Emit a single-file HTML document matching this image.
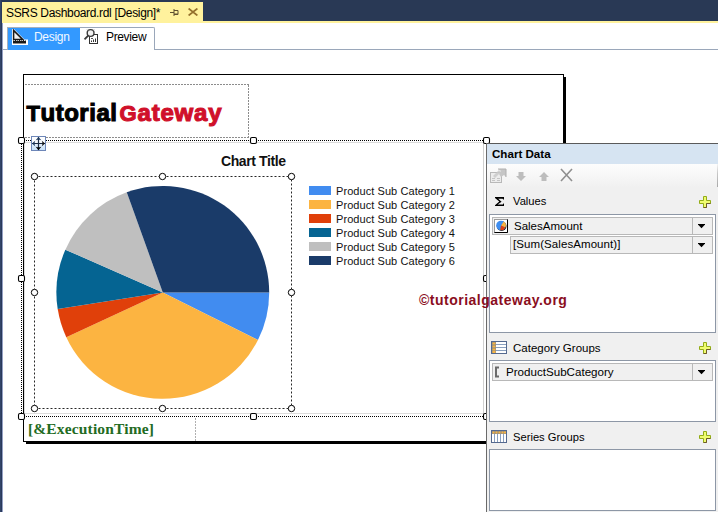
<!DOCTYPE html>
<html><head><meta charset="utf-8">
<style>
html,body{margin:0;padding:0;width:718px;height:512px;overflow:hidden;background:#fff;position:relative;font-family:"Liberation Sans",sans-serif;}
.a{position:absolute;}
.t{position:absolute;white-space:nowrap;line-height:1;}
</style></head><body>
<!-- frame -->
<div class="a" style="left:0;top:0;width:718px;height:2px;background:#293955"></div>
<div class="a" style="left:0;top:0;width:1px;height:512px;background:#33456a"></div>
<div class="a" style="left:1px;top:0;width:1px;height:512px;background:#2a3a5b"></div>
<div class="a" style="left:2px;top:23px;width:1px;height:489px;background:#94a0c4"></div>
<div class="a" style="left:203px;top:0;width:515px;height:21px;background:#293955"></div>
<div class="a" style="left:2px;top:2px;width:201px;height:19px;background:#fff29d"></div>
<div class="a" style="left:2px;top:21px;width:716px;height:2px;background:#fff29d"></div>
<div class="t" style="left:6px;top:7px;font-size:12px;letter-spacing:-0.33px;color:#000">SSRS Dashboard.rdl [Design]*</div>
<!-- pin -->
<svg class="a" style="left:168px;top:6px" width="12" height="12" viewBox="0 0 12 12">
<path d="M2 6.5H6 M6 3V10 M6 4.5H10V8.5H6" stroke="#5e5030" stroke-width="1" fill="none"/><path d="M6 8H10" stroke="#5e5030" stroke-width="1"/>
</svg>
<svg class="a" style="left:188px;top:8px" width="10" height="8" viewBox="0 0 10 8">
<path d="M0.6 0.5L9.4 7.5M9.4 0.5L0.6 7.5" stroke="#94702c" stroke-width="1.7" fill="none"/>
</svg>

<!-- tabs -->
<div class="a" style="left:3px;top:49px;width:715px;height:1px;background:#9aa7ba"></div>
<div class="a" style="left:7px;top:27px;width:73px;height:23px;background:#3399ff;border-top:1px solid #a8b0bc;border-left:1px solid #a8b0bc;box-sizing:border-box"></div>
<div class="t" style="left:34px;top:30.7px;font-size:12px;letter-spacing:-0.3px;color:#f2f8ff">Design</div>
<!-- design icon -->
<svg class="a" style="left:11px;top:28px" width="18" height="18" viewBox="0 0 18 18">
<path d="M1 1H3L13.5 11.5H17V17H1Z" fill="#fff"/>
<path d="M2.6 2.4V11.6H11.8Z" fill="#f2f2f2" stroke="#1a1a1a" stroke-width="1.5" stroke-linejoin="miter"/>
<rect x="2" y="13" width="13" height="2.5" fill="#1a1a1a"/>
<path d="M2.5 12.5V13.5M4.5 12V13.5M6.5 12.5V13.5M8.5 12V13.5M10.5 12.5V13.5M12.5 12V13.5M14.5 12.5V13.5" stroke="#1a1a1a" stroke-width="1"/>
</svg>
<div class="a" style="left:80px;top:27px;width:75px;height:23px;border-top:1px solid #9aa7ba;border-right:1px solid #9aa7ba;border-radius:0 2px 0 0;box-sizing:border-box;background:#fff"></div>
<div class="t" style="left:106px;top:30.7px;font-size:12px;letter-spacing:-0.35px;color:#000">Preview</div>
<svg class="a" style="left:82px;top:28px" width="18" height="18" viewBox="0 0 18 18">
<rect x="7.5" y="6.5" width="8" height="9" fill="#fff" stroke="#333" stroke-width="1"/>
<rect x="9" y="10" width="2" height="1" fill="#555"/><rect x="9" y="12.5" width="1" height="1.5" fill="#333"/><rect x="11" y="11.5" width="1" height="2.5" fill="#333"/><rect x="13" y="10.5" width="1" height="3.5" fill="#333"/>
<circle cx="8.6" cy="5" r="3.4" fill="#f2f2f2" stroke="#3a3a3a" stroke-width="1.4"/>
<path d="M6.2 7.6L2.5 11.3" stroke="#3a3a3a" stroke-width="1.8"/>
<path d="M5 1.5L6 2.5M12.2 1.5L11.2 2.5" stroke="#aaa" stroke-width="1"/>
</svg>

<!-- report body -->
<div class="a" style="left:23px;top:74px;width:541px;height:368px;border:1px solid #000;box-sizing:border-box"></div>
<div class="a" style="left:564px;top:77px;width:2px;height:367px;background:#000"></div>
<div class="a" style="left:26px;top:442px;width:540px;height:2px;background:#000"></div>

<!-- logo textbox -->

<div class="t" style="left:26.5px;top:101.4px;font-size:24px;font-weight:bold;color:#000;letter-spacing:0.53px;-webkit-text-stroke:1.1px #000"><span style="font-size:22px">T</span>utorial</div>
<div class="t" style="left:119.6px;top:101.4px;font-size:24px;font-weight:bold;color:#d0102a;letter-spacing:0.8px;-webkit-text-stroke:1.1px #d0102a"><span style="font-size:22px">G</span>ateway</div>

<!-- execution time textbox -->
<div class="a" style="left:24px;top:413px;width:460px;height:1px;background:#d8d8d8"></div>

<div class="t" style="left:28px;top:421px;font-family:'Liberation Serif',serif;font-size:15.5px;letter-spacing:0.15px;font-weight:bold;color:#236b23">[&amp;ExecutionTime]</div>

<!-- chart -->
<div class="a" style="left:24px;top:142px;width:460px;height:272px;border:1px solid #dcdcdc;border-right:none;box-sizing:border-box"></div>
<div class="a" style="left:483px;top:142px;width:1px;height:272px;background:#d0d0d0"></div>
<div class="a" style="left:21px;top:140px;width:466px;height:277px;border:1px dotted #000;box-sizing:border-box"></div>
<div class="t" style="left:221px;top:154px;font-size:14px;letter-spacing:-0.4px;font-weight:bold;color:#111">Chart Title</div>

<svg class="a" style="left:0;top:0" width="718" height="512">
<g stroke="#8c8c8c" stroke-width="1" stroke-dasharray="2 1" fill="none">
<path d="M25 84.5H249"/><path d="M248.5 85V138"/><path d="M25 137.5H248"/>
<path d="M195.5 418V441" stroke="#b0b0b0"/>
</g>
<g transform="translate(162.8 292.4)">
</g>
<path d="M162.8 292.4L269.20 292.40A106.4 106.4 0 0 1 257.94 340.04Z" fill="#418cf0"/>
<path d="M162.8 292.4L257.94 340.04A106.4 106.4 0 0 1 66.29 337.20Z" fill="#fcb441"/>
<path d="M162.8 292.4L66.29 337.20A106.4 106.4 0 0 1 57.71 309.04Z" fill="#e0400a"/>
<path d="M162.8 292.4L57.71 309.04A106.4 106.4 0 0 1 65.37 249.63Z" fill="#056492"/>
<path d="M162.8 292.4L65.37 249.63A106.4 106.4 0 0 1 126.76 192.29Z" fill="#bfbfbf"/>
<path d="M162.8 292.4L126.76 192.29A106.4 106.4 0 0 1 269.20 292.40Z" fill="#1a3b69"/>
<!-- plot area -->
<rect x="34.5" y="176.5" width="257" height="232" fill="none" stroke="#000" stroke-width="1" stroke-dasharray="2 2" opacity="0.85"/>
<g fill="#fff" stroke="#000" stroke-width="1">
<circle cx="34.5" cy="176.5" r="3.2"/><circle cx="162.5" cy="176.5" r="3.2"/><circle cx="291.5" cy="176.5" r="3.2"/>
<circle cx="34.5" cy="292.5" r="3.2"/><circle cx="291.5" cy="292.5" r="3.2"/>
<circle cx="34.5" cy="408.5" r="3.2"/><circle cx="162.5" cy="408.5" r="3.2"/><circle cx="291.5" cy="408.5" r="3.2"/>
</g>
<!-- chart handles -->
<g fill="#fff" stroke="#000" stroke-width="1.1">
<rect x="18.5" y="137.5" width="6" height="6" rx="1.5"/><rect x="250.5" y="137.5" width="6" height="6" rx="1.5"/><rect x="483.5" y="137.5" width="6" height="6" rx="1.5"/>
<rect x="18.5" y="275.5" width="6" height="6" rx="1.5"/><rect x="483.5" y="275.5" width="6" height="6" rx="1.5"/>
<rect x="18.5" y="413.5" width="6" height="6" rx="1.5"/><rect x="250.5" y="413.5" width="6" height="6" rx="1.5"/><rect x="483.5" y="413.5" width="6" height="6" rx="1.5"/>
</g>
<!-- move icon -->
<defs><linearGradient id="mg" x1="0" y1="0" x2="1" y2="1"><stop offset="0" stop-color="#f4f8fd"/><stop offset="0.5" stop-color="#e4eefa"/><stop offset="1" stop-color="#b8d8f8"/></linearGradient></defs>
<defs><linearGradient id="mg2" x1="0" y1="0" x2="0" y2="1"><stop offset="0" stop-color="#ffffff"/><stop offset="0.5" stop-color="#f4f8fc"/><stop offset="0.55" stop-color="#e2eefa"/><stop offset="1" stop-color="#c4e0fa"/></linearGradient></defs>
<rect x="31.5" y="136.5" width="14" height="14" fill="url(#mg2)" stroke="#6d86b8" stroke-width="1"/>
<path d="M38.5 137V150M32 143.5H45" stroke="#1c2c44" stroke-width="1.2"/>
<path d="M38.5 137L41.3 140.3L38.5 139.4L35.7 140.3Z" fill="#1e3a5f"/>
<path d="M38.5 150.2L41.3 146.8L38.5 147.6L35.7 146.8Z" fill="#000"/>
<path d="M32 143.5L35.2 140.8L34.4 143.5L35.2 146.2Z" fill="#1e3a5f"/>
<path d="M45 143.5L41.8 140.8L42.6 143.5L41.8 146.2Z" fill="#111"/>
<!-- legend -->
<rect x="309" y="186" width="22" height="9" fill="#418cf0"/>
<rect x="309" y="200" width="22" height="9" fill="#fcb441"/>
<rect x="309" y="214" width="22" height="9" fill="#e0400a"/>
<rect x="309" y="228" width="22" height="9" fill="#056492"/>
<rect x="309" y="242" width="22" height="9" fill="#bfbfbf"/>
<rect x="309" y="256" width="22" height="9" fill="#1a3b69"/>
</svg>

<div class="t" style="left:336px;top:184px;font-size:11px;letter-spacing:0.07px;color:#111;line-height:14px">Product Sub Category 1<br>Product Sub Category 2<br>Product Sub Category 3<br>Product Sub Category 4<br>Product Sub Category 5<br>Product Sub Category 6</div>
<!-- PANEL -->
<div class="a" style="left:486px;top:143px;width:232px;height:369px;background:#f0f0f0;border-left:1px solid #6a6a6a;border-top:1px solid #5a5a5a;box-sizing:border-box"></div>
<div class="a" style="left:487px;top:144px;width:231px;height:20px;background:#d6e4f2"></div>
<div class="a" style="left:487px;top:164px;width:231px;height:24px;background:linear-gradient(#fdfdfd,#f0f0f0)"></div>
<div class="a" style="left:717px;top:164px;width:1px;height:23px;background:linear-gradient(#f4f4f4,#c8c8c8 40%,#a8a8a8)"></div>
<div class="t" style="left:492px;top:148px;font-size:11.6px;font-weight:bold;color:#000">Chart Data</div>
<!-- toolbar icons -->
<svg class="a" style="left:488px;top:166px" width="90" height="20" viewBox="0 0 90 20">
<rect x="2.5" y="6.5" width="11" height="10" fill="#ececec" stroke="#b8b8b8"/>
<path d="M4 12.5H7M9 12.5H12M4 14.5H7M9 14.5H12" stroke="#c4c4c4" stroke-width="1"/>
<path d="M5 10L11 4L13 6L7 12Z" fill="#c8c8c8" opacity="0.8"/>
<path d="M10 3H18V11L16 9L13 11L11 8L13 5Z" fill="#c6c6c6"/>
<path d="M10 3H18V11" fill="none" stroke="#b0b0b0" stroke-width="1"/>
<path d="M30.5 6H35.5V10H38L33 15L28 10H30.5Z" fill="#bdbdbd"/>
<path d="M56 6L61 11H58.5V15H53.5V11H51Z" fill="#bdbdbd"/>
<path d="M73 3L84 15M84 3L73 15" stroke="#8f8f8f" stroke-width="1.6"/>
</svg>
<!-- Values header -->
<svg class="a" style="left:494px;top:196px" width="11" height="11" viewBox="0 0 11 11"><path d="M1 1H10V3.5H9.2L8.6 2.7H4.2L7.6 5.8L3.6 8.5H8.8L9.3 7.6H10V10H1V9.2L5.3 5.6L1 1.9Z" fill="#000"/></svg>
<div class="t" style="left:513px;top:196px;font-size:11.2px;color:#000">Values</div>
<svg class="a" style="left:699px;top:196px" width="12" height="12" viewBox="0 0 12 12">
<path d="M4.5 0.5H7.5V4.5H11.5V7.5H7.5V11.5H4.5V7.5H0.5V4.5H4.5Z" fill="#f0fc70" stroke="#93ac18" stroke-width="1"/><path d="M11.5 7.5H7.5V11.5H4.5" fill="none" stroke="#6e5a2a" stroke-width="1"/>
</svg>
<!-- values listbox -->
<div class="a" style="left:489px;top:214px;width:227px;height:119px;background:#fff;border:1px solid #8d97a6;box-sizing:border-box"></div>
<div class="a" style="left:492px;top:217px;width:221px;height:18px;background:#f0f0f0;border:1px solid #b8b8b8;box-sizing:border-box"></div>
<div class="a" style="left:692px;top:218px;width:1px;height:16px;background:#b8b8b8"></div>
<svg class="a" style="left:698px;top:224px" width="7" height="5"><path d="M0 0H7V0.6L3.5 4.3L0 0.6Z" fill="#000"/></svg>
<svg class="a" style="left:494px;top:219px" width="14" height="14" viewBox="0 0 14 14">
<rect x="0.5" y="0.5" width="13" height="13" fill="#fff" stroke="#9a9a9a"/>
<path d="M13.5 0.5V13.5H0.5" fill="none" stroke="#000"/>
<circle cx="7.6" cy="7.1" r="4.9" fill="#000" opacity="0.9"/>
<circle cx="7" cy="6.5" r="4.8" fill="#3f8ef0"/>
<path d="M7 6.5L9.75 2.57A4.8 4.8 0 0 1 11.35 8.53Z" fill="#fbb43c"/>
<path d="M7 6.5L11.35 8.53A4.8 4.8 0 0 1 6.17 11.23Z" fill="#e04010"/>
</svg>
<div class="t" style="left:514px;top:221px;font-size:11.5px;color:#000">SalesAmount</div>
<div class="a" style="left:510px;top:236px;width:203px;height:18px;background:#f0f0f0;border:1px solid #b8b8b8;box-sizing:border-box"></div>
<div class="a" style="left:692px;top:237px;width:1px;height:16px;background:#b8b8b8"></div>
<svg class="a" style="left:698px;top:243px" width="7" height="5"><path d="M0 0H7V0.6L3.5 4.3L0 0.6Z" fill="#000"/></svg>
<div class="t" style="left:513px;top:239px;font-size:11.5px;letter-spacing:0.08px;color:#000">[Sum(SalesAmount)]</div>
<!-- Category groups -->
<svg class="a" style="left:491px;top:341px" width="16" height="13" viewBox="0 0 16 13">
<rect x="0.5" y="0.5" width="15" height="12" fill="#fff" stroke="#54698f"/>
<rect x="1" y="1" width="4" height="11" fill="#8a8a8a"/>
<path d="M5 3.5H15M5 6.5H15M5 9.5H15" stroke="#8aa0bf" stroke-width="1"/>
<rect x="1.5" y="1.5" width="3" height="2" fill="#f8b440"/><rect x="1.5" y="4.5" width="3" height="2" fill="#f8b440"/><rect x="1.5" y="7.5" width="3" height="2" fill="#f8b440"/><rect x="1.5" y="10" width="3" height="2" fill="#f8b440"/>
</svg>
<div class="t" style="left:513px;top:343px;font-size:11.5px;color:#000">Category Groups</div>
<svg class="a" style="left:699px;top:342px" width="12" height="12" viewBox="0 0 12 12">
<path d="M4.5 0.5H7.5V4.5H11.5V7.5H7.5V11.5H4.5V7.5H0.5V4.5H4.5Z" fill="#f0fc70" stroke="#93ac18" stroke-width="1"/><path d="M11.5 7.5H7.5V11.5H4.5" fill="none" stroke="#6e5a2a" stroke-width="1"/>
</svg>
<div class="a" style="left:489px;top:360px;width:227px;height:62px;background:#fff;border:1px solid #8d97a6;box-sizing:border-box"></div>
<div class="a" style="left:492px;top:363px;width:221px;height:18px;background:#f0f0f0;border:1px solid #b8b8b8;box-sizing:border-box"></div>
<div class="a" style="left:692px;top:364px;width:1px;height:16px;background:#b8b8b8"></div>
<svg class="a" style="left:698px;top:370px" width="7" height="5"><path d="M0 0H7V0.6L3.5 4.3L0 0.6Z" fill="#000"/></svg>
<svg class="a" style="left:494px;top:366px" width="6" height="12"><path d="M5 1.5H2V10.5H5" fill="none" stroke="#6b6b6b" stroke-width="2"/></svg>
<div class="t" style="left:506px;top:366px;font-size:11.6px;color:#000">ProductSubCategory</div>
<!-- Series groups -->
<svg class="a" style="left:491px;top:430px" width="16" height="13" viewBox="0 0 16 13">
<rect x="0.5" y="0.5" width="15" height="12" fill="#fff" stroke="#54698f"/>
<rect x="1" y="1" width="14" height="3" fill="#8a8a8a"/>
<path d="M3.5 4V12M6.5 4V12M9.5 4V12M12.5 4V12" stroke="#8aa0bf" stroke-width="1"/>
<rect x="1.5" y="1.5" width="2" height="2" fill="#f8b440"/><rect x="4.5" y="1.5" width="2" height="2" fill="#f8b440"/><rect x="7.5" y="1.5" width="2" height="2" fill="#f8b440"/><rect x="10.5" y="1.5" width="2" height="2" fill="#f8b440"/><rect x="13" y="1.5" width="2" height="2" fill="#f8b440"/>
</svg>
<div class="t" style="left:513px;top:432px;font-size:11.2px;color:#000">Series Groups</div>
<svg class="a" style="left:699px;top:431px" width="12" height="12" viewBox="0 0 12 12">
<path d="M4.5 0.5H7.5V4.5H11.5V7.5H7.5V11.5H4.5V7.5H0.5V4.5H4.5Z" fill="#f0fc70" stroke="#93ac18" stroke-width="1"/><path d="M11.5 7.5H7.5V11.5H4.5" fill="none" stroke="#6e5a2a" stroke-width="1"/>
</svg>
<div class="a" style="left:489px;top:449px;width:227px;height:62px;background:#fff;border:1px solid #8d97a6;box-sizing:border-box"></div>
<!-- WATERMARK -->
<div class="t" style="left:419px;top:293px;font-size:14px;font-weight:bold;color:#8a0e1e;letter-spacing:0.5px">&#169;tutorialgateway.org</div>
</body></html>
